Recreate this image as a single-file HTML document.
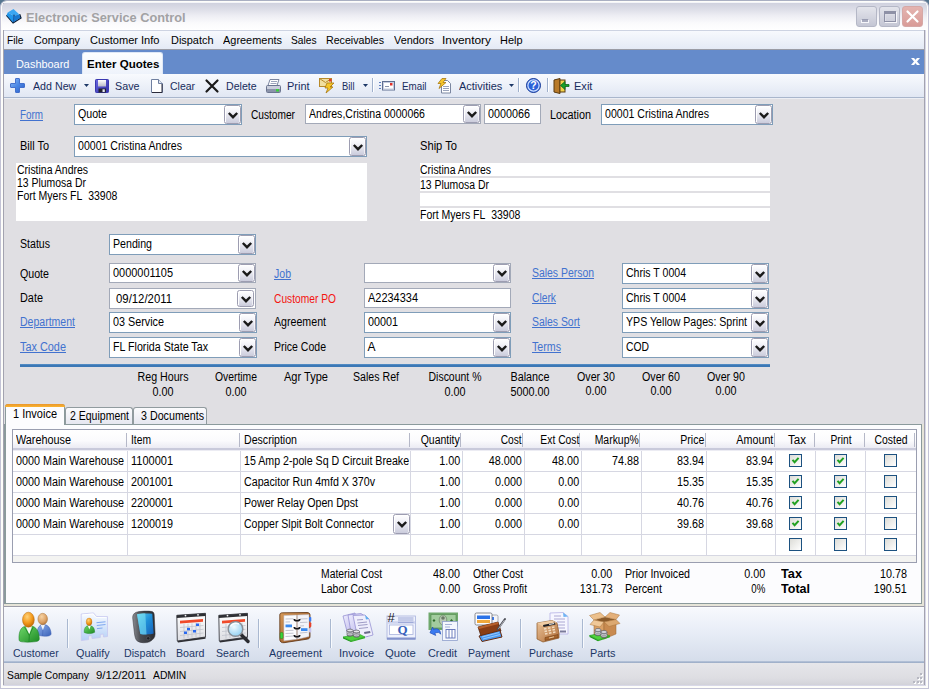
<!DOCTYPE html>
<html><head><meta charset="utf-8"><title>Electronic Service Control</title>
<style>
*{box-sizing:border-box;margin:0;padding:0}
html,body{width:929px;height:689px;overflow:hidden;background:#e0dfe3}
body{position:relative;font-family:"Liberation Sans",sans-serif;font-size:11px;color:#000;line-height:13px}
.a{position:absolute;white-space:nowrap}
.t{position:absolute;white-space:nowrap;font-size:11px;line-height:13px;color:#000}
.f{position:absolute;white-space:nowrap;font-size:12px;line-height:14px}
.lnk{color:#4272cf;text-decoration:underline}
.db{position:absolute;width:17px;border:1px solid #9d9db1;border-radius:2.5px;background:linear-gradient(#ffffff,#f4f4f9 30%,#cbccdc 100%);box-shadow:inset 1px 1px 0 #fff,inset -1px 0 0 rgba(255,255,255,.6);display:flex;align-items:center;justify-content:center}
.db svg{display:block;margin-top:1px}
svg{position:absolute;overflow:visible}
.db svg{position:static}

</style></head><body>
<div class="a" style="left:0px;top:0px;width:929px;height:689px;background:#56768f"></div>
<div class="a" style="left:0px;top:0px;width:929px;height:689px;border:1px solid #c3c3d6;border-top-color:#a9afc2;border-radius:7px 7px 0 0;background:#fdfdfa"></div>
<div class="a" style="left:3px;top:3px;width:922px;height:683px;background:#a3a3b0"></div>
<div class="a" style="left:925px;top:3px;width:1px;height:683px;background:#d8d8e8"></div>
<div class="a" style="left:3px;top:685px;width:923px;height:1px;background:#d8d8e8"></div>
<div class="a" style="left:2px;top:2px;width:925px;height:28px;border-radius:5px 5px 0 0;background:linear-gradient(#cdcfdd 0,#dcdde7 25%,#eeeef4 50%,#fafafc 75%,#ffffff 100%)"></div>
<div class="a" style="left:3px;top:2px;width:923px;height:1px;background:#f4f5f9"></div>
<svg style="left:0px;top:0px" width="28" height="28" viewBox="0 0 28 28"><path d="M6.500 15.300 L13.100 22.900 L20.900 18 L19.600 14.300" fill="none" stroke="#0a1a30" stroke-width="1.400"/><path d="M7.700 12.400 L13.500 8.900 L19.400 14.500 L13.800 15.700Z" fill="#3aa6f2"/><path d="M7.700 12.400 L13.800 15.700 L13.100 22.600 L6.600 15.200Z" fill="#2096ea"/><path d="M13.800 15.700 L19.400 14.500 L20.500 17.800 L13.100 22.600Z" fill="#1878cf"/><path d="M13.800 15.700 L13.300 22" stroke="#1560b0" stroke-width="1"/><circle cx="14" cy="15.400" r=".8" fill="#14508a"/></svg>
<div class="t " style="left:26.0px;top:11.5px;color:#a2a2a4;font-weight:bold;font-size:12.5px;transform-origin:0 0;transform:scaleX(1.021);">Electronic Service Control</div>
<div class="a" style="left:856px;top:6px;width:21px;height:21px;border:1px solid #b4b7c6;border-radius:3px;background:linear-gradient(#e4e5ec,#c4c6d4)"><div class="a" style="left:4px;top:12px;width:8px;height:4px;background:#a9acbf;border:1px solid #f6f6fa;border-top-color:#9a9db2"></div></div>
<div class="a" style="left:879px;top:6px;width:21px;height:21px;border:1px solid #b4b7c6;border-radius:3px;background:linear-gradient(#e4e5ec,#c4c6d4)"><div class="a" style="left:4px;top:4px;width:12px;height:11px;border:1px solid #8e91a6;border-top:3px solid #8e91a6;box-shadow:1px 1px 0 #f6f6fa,inset 1px 1px 0 #dcdde6"></div></div>
<div class="a" style="left:902px;top:6px;width:21px;height:21px;border:1px solid #d6a8a6;border-radius:3px;background:linear-gradient(#e4b4b0,#d99c98)"><svg style="left:3px;top:3px" width="13" height="13" viewBox="0 0 13 13"><path d="M1.5 1.5 L11.5 11.5 M11.5 1.5 L1.5 11.5" stroke="#fff" stroke-width="2.2" stroke-linecap="round"/></svg></div>
<div class="a" style="left:4px;top:30px;width:920px;height:20px;background:linear-gradient(#f7f9fd,#e4eaf6);border-top:1px solid #cdd3e2;border-bottom:1px solid #9a9ca6"></div>
<div class="t " style="left:7.0px;top:34px;transform-origin:0 0;transform:scaleX(0.931);">File</div>
<div class="t " style="left:33.5px;top:34px;transform-origin:0 0;transform:scaleX(0.977);">Company</div>
<div class="t " style="left:90.0px;top:34px;transform-origin:0 0;transform:scaleX(1.006);">Customer Info</div>
<div class="t " style="left:170.5px;top:34px;transform-origin:0 0;transform:scaleX(0.993);">Dispatch</div>
<div class="t " style="left:222.5px;top:34px;transform-origin:0 0;transform:scaleX(0.995);">Agreements</div>
<div class="t " style="left:291.0px;top:34px;transform-origin:0 0;transform:scaleX(0.927);">Sales</div>
<div class="t " style="left:325.5px;top:34px;transform-origin:0 0;transform:scaleX(0.968);">Receivables</div>
<div class="t " style="left:393.5px;top:34px;transform-origin:0 0;transform:scaleX(0.991);">Vendors</div>
<div class="t " style="left:441.5px;top:34px;transform-origin:0 0;transform:scaleX(1.083);">Inventory</div>
<div class="t " style="left:499.5px;top:34px;transform-origin:0 0;transform:scaleX(0.995);">Help</div>
<div class="a" style="left:4px;top:50px;width:920px;height:24px;background:#658bcb"></div>
<div class="t " style="left:15.5px;top:58px;color:#fff;font-size:11px;transform-origin:0 0;transform:scaleX(0.991);">Dashboard</div>
<div class="a" style="left:82px;top:52px;width:81px;height:22px;background:linear-gradient(#fdfeff,#eef3fb);border-radius:3px 3px 0 0;border:1px solid #dfe8f6;border-bottom:none"></div>
<div class="t " style="left:86.8px;top:58px;font-weight:bold;font-size:11px;transform-origin:0 0;transform:scaleX(1.048);">Enter Quotes</div>
<svg style="left:911px;top:58px" width="9" height="7" viewBox="0 0 9 7"><path d="M0 0 H3 L9 7 H6Z" fill="#fff"/><path d="M9 0 H6 L0 7 H3Z" fill="#fff"/></svg>
<div class="a" style="left:4px;top:74px;width:920px;height:24px;background:linear-gradient(#f8fafe,#e1e7f3);border-bottom:1px solid #a9b6cc"></div>
<div class="t " style="left:33.2px;top:80px;color:#172c5c;font-size:11px;transform-origin:0 0;transform:scaleX(0.970);">Add New</div>
<div class="t " style="left:115.0px;top:80px;color:#172c5c;font-size:11px;transform-origin:0 0;transform:scaleX(0.977);">Save</div>
<div class="t " style="left:169.5px;top:80px;color:#172c5c;font-size:11px;transform-origin:0 0;transform:scaleX(0.951);">Clear</div>
<div class="t " style="left:226.2px;top:80px;color:#172c5c;font-size:11px;transform-origin:0 0;transform:scaleX(0.962);">Delete</div>
<div class="t " style="left:287.0px;top:80px;color:#172c5c;font-size:11px;transform-origin:0 0;transform:scaleX(0.995);">Print</div>
<div class="t " style="left:342.0px;top:80px;color:#172c5c;font-size:11px;transform-origin:0 0;transform:scaleX(0.852);">Bill</div>
<div class="t " style="left:402.0px;top:80px;color:#172c5c;font-size:11px;transform-origin:0 0;transform:scaleX(0.891);">Email</div>
<div class="t " style="left:458.5px;top:80px;color:#172c5c;font-size:11px;transform-origin:0 0;transform:scaleX(0.998);">Activities</div>
<div class="t " style="left:573.9px;top:80px;color:#172c5c;font-size:11px;transform-origin:0 0;transform:scaleX(1.003);">Exit</div>
<svg style="left:84px;top:84px" width="5" height="3" viewBox="0 0 5 3"><path d="M0 0H5L2.5 3Z" fill="#1c3766"/></svg>
<svg style="left:363px;top:84px" width="5" height="3" viewBox="0 0 5 3"><path d="M0 0H5L2.5 3Z" fill="#1c3766"/></svg>
<svg style="left:509px;top:84px" width="5" height="3" viewBox="0 0 5 3"><path d="M0 0H5L2.5 3Z" fill="#1c3766"/></svg>
<div class="a" style="left:372px;top:78px;width:1px;height:14px;background:#9fb0cc"></div>
<div class="a" style="left:373px;top:78px;width:1px;height:14px;background:#fff"></div>
<div class="a" style="left:518px;top:78px;width:1px;height:14px;background:#9fb0cc"></div>
<div class="a" style="left:519px;top:78px;width:1px;height:14px;background:#fff"></div>
<div class="a" style="left:547px;top:78px;width:1px;height:14px;background:#9fb0cc"></div>
<div class="a" style="left:548px;top:78px;width:1px;height:14px;background:#fff"></div>
<svg style="left:10px;top:78px" width="15" height="15" viewBox="0 0 15 15"><defs><linearGradient id="gPl" x1="0" y1="0" x2="1" y2="1"><stop offset="0" stop-color="#8fbcf8"/><stop offset=".5" stop-color="#4a86e4"/><stop offset="1" stop-color="#2a5cc4"/></linearGradient><linearGradient id="gFl" x1="0" y1="0" x2="1" y2="1"><stop offset="0" stop-color="#6a68e0"/><stop offset="1" stop-color="#3230a8"/></linearGradient><linearGradient id="gFw" x1="0" y1="0" x2="0" y2="1"><stop offset="0" stop-color="#ffffff"/><stop offset="1" stop-color="#b9bac8"/></linearGradient></defs><path d="M5.500 0.800 Q5.500 0.500 6 0.500 H9 Q9.500 0.500 9.500 1 V5.500 H14 Q14.500 5.500 14.500 6 V9 Q14.500 9.500 14 9.500 H9.500 V14 Q9.500 14.500 9 14.500 H6 Q5.500 14.500 5.500 14 V9.500 H1 Q0.500 9.500 0.500 9 V6 Q0.500 5.500 1 5.500 H5.500Z" fill="url(#gPl)" stroke="#3a68c8" stroke-width=".9"/></svg>
<svg style="left:95px;top:79px" width="14" height="14" viewBox="0 0 14 14"><rect x="0.500" y="0.500" width="13" height="13" rx=".8" fill="url(#gFl)" stroke="#3a38b0"/><rect x="3" y="1" width="8" height="6.500" fill="url(#gFw)"/><rect x="3.500" y="9.500" width="7.500" height="4" fill="#22222e"/><rect x="7.500" y="10.300" width="2.300" height="2.700" fill="#e4e5f0"/></svg>
<svg style="left:151px;top:79px" width="12" height="14" viewBox="0 0 12 14"><path d="M0.5 0.5h7l4 4v9h-11z" fill="#fff" stroke="#6f7fa0"/><path d="M7.5 0.5v4h4" fill="#dfe5f0" stroke="#6f7fa0"/><path d="M11 5v8.5H1" fill="none" stroke="#2a2a3a" stroke-width="1"/></svg>
<svg style="left:205px;top:79px" width="14" height="14" viewBox="0 0 14 14"><path d="M1.5 1.5 L12.5 12.5 M12.5 1.5 L1.5 12.5" stroke="#1a1a1a" stroke-width="2.2" stroke-linecap="round"/></svg>
<svg style="left:266px;top:79px" width="15" height="14" viewBox="0 0 15 14"><path d="M4 0.5h9l-2 6h-9z" fill="#fff" stroke="#7b86a0"/><path d="M5 2.5h6M4.5 4.5h6" stroke="#9aa4bc"/><rect x="0.5" y="6.5" width="14" height="7" rx="1" fill="#c9cedc" stroke="#6b7590"/><rect x="1" y="10" width="13" height="3" fill="#8a93aa"/><rect x="10" y="10" width="3" height="2.5" fill="#3ad03a"/></svg>
<svg style="left:319px;top:78px" width="16" height="15" viewBox="0 0 16 15"><rect x="0.5" y="0.5" width="12" height="8" fill="#f1dfa0" stroke="#b88a2a"/><path d="M0.5 0.5l6 4 6-4" fill="none" stroke="#b88a2a"/><rect x="10" y="1" width="2.5" height="2.5" fill="#e03a2a"/><path d="M8 5h7l-4 4h3l-7 6 2-5h-3z" fill="#f6c62a" stroke="#a87812" stroke-width=".8"/></svg>
<svg style="left:379px;top:81px" width="16" height="10" viewBox="0 0 16 10"><rect x="3.5" y="0.5" width="12" height="8.5" fill="#f4f6fb" stroke="#5f6f92"/><rect x="4.5" y="1.5" width="10" height="6.5" fill="#fff" stroke="#c5cce0"/><rect x="11" y="2" width="2.5" height="2.5" fill="#e0302a"/><path d="M6 5.5h4" stroke="#8a94b0"/><path d="M0 1.5h2M0 4.5h2M0 7.5h2" stroke="#5f7fc0"/></svg>
<svg style="left:437px;top:78px" width="15" height="16" viewBox="0 0 15 16"><path d="M4.5 2.5h6l3 3v9.500h-9z" fill="#fff" stroke="#7b86a0"/><path d="M6 8.500h6M6 10.500h6M6 12.500h6" stroke="#9aa4bc"/><path d="M5 0.500h4l-3 4h3l-7 6 2-5h-3z" fill="#f6c62a" stroke="#a87812" stroke-width=".8"/></svg>
<svg style="left:526px;top:78px" width="15" height="15" viewBox="0 0 15 15"><circle cx="7.5" cy="7.5" r="7" fill="#2a62d8" stroke="#1a3c98"/><circle cx="7.500" cy="7.5" r="5.600" fill="none" stroke="#cfe0ff" stroke-width="1.2"/><text x="7.500" y="11.300" font-family="Liberation Sans,sans-serif" font-size="10.500" font-weight="bold" fill="#fff" text-anchor="middle">?</text></svg>
<svg style="left:553px;top:78px" width="17" height="16" viewBox="0 0 17 16"><path d="M1 2l6-1.500v15l-6-1.500z" fill="#b87a2a" stroke="#5a3a10"/><rect x="7" y="2" width="5" height="12" fill="#f2d24a" stroke="#5a3a10"/><path d="M16 8.500h-4v3l-4.500-4 4.500-4v3h4z" fill="#18a028" stroke="#0c6a18" stroke-width=".8"/></svg>
<div class="a" style="left:4px;top:98px;width:920px;height:508px;background:#e0dfe3"></div>
<div class="a" style="left:4px;top:98px;width:920px;height:1px;background:#eceef4"></div>
<div class="f lnk" style="top:108px;transform:scaleX(0.822);left:20px;transform-origin:0 0;">Form</div>
<div class="a" style="left:74px;top:104px;width:168px;height:21px;background:#fff;border:1px solid #7f9db9;"></div>
<div class="db" style="left:224px;top:105px;height:19px"><svg width="10" height="7" viewBox="0 0 10 7"><path d="M0.800 1 L5 5.200 L9.200 1" fill="none" stroke="#1a1a1a" stroke-width="2.400"/></svg></div>
<div class="f " style="top:107px;transform:scaleX(0.887);left:77.5px;transform-origin:0 0;">Quote</div>
<div class="f " style="top:108px;transform:scaleX(0.846);left:251px;transform-origin:0 0;">Customer</div>
<div class="a" style="left:305px;top:104px;width:176px;height:20px;background:#fff;border:1px solid #a3a9b8;"></div>
<div class="db" style="left:463px;top:105px;height:18px"><svg width="10" height="7" viewBox="0 0 10 7"><path d="M0.800 1 L5 5.200 L9.200 1" fill="none" stroke="#1a1a1a" stroke-width="2.400"/></svg></div>
<div class="f " style="top:107px;transform:scaleX(0.878);left:308.5px;transform-origin:0 0;">Andres,Cristina 0000066</div>
<div class="a" style="left:484px;top:104px;width:57px;height:20px;background:#fff;border:1px solid #a3a9b8"></div>
<div class="f " style="top:107px;transform:scaleX(0.899);left:488px;transform-origin:0 0;">0000066</div>
<div class="f " style="top:108px;transform:scaleX(0.904);left:550px;transform-origin:0 0;">Location</div>
<div class="a" style="left:601px;top:104px;width:172px;height:21px;background:#fff;border:1px solid #7f9db9;"></div>
<div class="db" style="left:755px;top:105px;height:19px"><svg width="10" height="7" viewBox="0 0 10 7"><path d="M0.800 1 L5 5.200 L9.200 1" fill="none" stroke="#1a1a1a" stroke-width="2.400"/></svg></div>
<div class="f " style="top:107px;transform:scaleX(0.881);left:604.5px;transform-origin:0 0;">00001 Cristina Andres</div>
<div class="f " style="top:139px;transform:scaleX(0.912);left:20px;transform-origin:0 0;">Bill To</div>
<div class="a" style="left:74px;top:136px;width:293px;height:21px;background:#fff;border:1px solid #7f9db9;"></div>
<div class="db" style="left:349px;top:137px;height:19px"><svg width="10" height="7" viewBox="0 0 10 7"><path d="M0.800 1 L5 5.200 L9.200 1" fill="none" stroke="#1a1a1a" stroke-width="2.400"/></svg></div>
<div class="f " style="top:139px;transform:scaleX(0.881);left:77.5px;transform-origin:0 0;">00001 Cristina Andres</div>
<div class="f " style="top:139px;transform:scaleX(0.929);left:420px;transform-origin:0 0;">Ship To</div>
<div class="a" style="left:16px;top:163px;width:351px;height:58px;background:#fff"></div>
<div class="f " style="top:163px;transform:scaleX(0.873);left:17px;transform-origin:0 0;">Cristina Andres</div>
<div class="f " style="top:176px;transform:scaleX(0.869);left:17px;transform-origin:0 0;">13 Plumosa Dr</div>
<div class="f " style="top:189px;transform:scaleX(0.875);left:17px;transform-origin:0 0;">Fort Myers FL&nbsp; 33908</div>
<div class="a" style="left:420px;top:163px;width:350px;height:13px;background:#fff"></div>
<div class="f " style="top:163px;transform:scaleX(0.873);left:420px;transform-origin:0 0;">Cristina Andres</div>
<div class="a" style="left:420px;top:178px;width:350px;height:13px;background:#fff"></div>
<div class="f " style="top:178px;transform:scaleX(0.869);left:420px;transform-origin:0 0;">13 Plumosa Dr</div>
<div class="a" style="left:420px;top:193px;width:350px;height:13px;background:#fff"></div>
<div class="a" style="left:420px;top:208px;width:350px;height:13px;background:#fff"></div>
<div class="f " style="top:208px;transform:scaleX(0.875);left:420px;transform-origin:0 0;">Fort Myers FL&nbsp; 33908</div>
<div class="f " style="top:237px;transform:scaleX(0.882);left:20px;transform-origin:0 0;">Status</div>
<div class="a" style="left:109px;top:234px;width:147px;height:21px;background:#fff;border:1px solid #7f9db9;"></div>
<div class="db" style="left:238px;top:235px;height:19px"><svg width="10" height="7" viewBox="0 0 10 7"><path d="M0.800 1 L5 5.200 L9.200 1" fill="none" stroke="#1a1a1a" stroke-width="2.400"/></svg></div>
<div class="f " style="top:237px;transform:scaleX(0.886);left:112.5px;transform-origin:0 0;">Pending</div>
<div class="f " style="top:267px;transform:scaleX(0.887);left:20px;transform-origin:0 0;">Quote</div>
<div class="a" style="left:109px;top:263px;width:147px;height:20px;background:#fff;border:1px solid #a3a9b8;"></div>
<div class="db" style="left:238px;top:264px;height:18px"><svg width="10" height="7" viewBox="0 0 10 7"><path d="M0.800 1 L5 5.200 L9.200 1" fill="none" stroke="#1a1a1a" stroke-width="2.400"/></svg></div>
<div class="f " style="top:266px;transform:scaleX(0.911);left:112.5px;transform-origin:0 0;">0000001105</div>
<div class="f " style="top:291px;transform:scaleX(0.907);left:20px;transform-origin:0 0;">Date</div>
<div class="a" style="left:109px;top:288px;width:147px;height:21px;background:#fff;border:1px solid #a3a9b8;"></div>
<div class="db" style="left:237px;top:290px;height:17px"><svg width="10" height="7" viewBox="0 0 10 7"><path d="M0.800 1 L5 5.200 L9.200 1" fill="none" stroke="#1a1a1a" stroke-width="2.400"/></svg></div>
<div class="f " style="top:292px;transform:scaleX(0.946);left:116px;transform-origin:0 0;">09/12/2011</div>
<div class="f lnk" style="top:315px;transform:scaleX(0.877);left:20px;transform-origin:0 0;">Department</div>
<div class="a" style="left:109px;top:312px;width:148px;height:21px;background:#fff;border:1px solid #7f9db9;"></div>
<div class="db" style="left:239px;top:313px;height:19px"><svg width="10" height="7" viewBox="0 0 10 7"><path d="M0.800 1 L5 5.200 L9.200 1" fill="none" stroke="#1a1a1a" stroke-width="2.400"/></svg></div>
<div class="f " style="top:315px;transform:scaleX(0.900);left:112.5px;transform-origin:0 0;">03 Service</div>
<div class="f lnk" style="top:340px;transform:scaleX(0.907);left:20px;transform-origin:0 0;">Tax Code</div>
<div class="a" style="left:109px;top:337px;width:148px;height:21px;background:#fff;border:1px solid #7f9db9;"></div>
<div class="db" style="left:239px;top:338px;height:19px"><svg width="10" height="7" viewBox="0 0 10 7"><path d="M0.800 1 L5 5.200 L9.200 1" fill="none" stroke="#1a1a1a" stroke-width="2.400"/></svg></div>
<div class="f " style="top:340px;transform:scaleX(0.890);left:112.5px;transform-origin:0 0;">FL Florida State Tax</div>
<div class="f lnk" style="top:267px;transform:scaleX(0.879);left:274px;transform-origin:0 0;">Job</div>
<div class="a" style="left:364px;top:263px;width:147px;height:20px;background:#fff;border:1px solid #a3a9b8;"></div>
<div class="db" style="left:493px;top:264px;height:18px"><svg width="10" height="7" viewBox="0 0 10 7"><path d="M0.800 1 L5 5.200 L9.200 1" fill="none" stroke="#1a1a1a" stroke-width="2.400"/></svg></div>
<div class="f " style="top:292px;transform:scaleX(0.853);left:274px;transform-origin:0 0;color:#f41410;">Customer PO</div>
<div class="a" style="left:364px;top:288px;width:147px;height:20px;background:#fff;border:1px solid #a3a9b8"></div>
<div class="f " style="top:291px;transform:scaleX(0.914);left:368px;transform-origin:0 0;">A2234334</div>
<div class="f " style="top:315px;transform:scaleX(0.886);left:274px;transform-origin:0 0;">Agreement</div>
<div class="a" style="left:364px;top:312px;width:147px;height:21px;background:#fff;border:1px solid #7f9db9;"></div>
<div class="db" style="left:493px;top:313px;height:19px"><svg width="10" height="7" viewBox="0 0 10 7"><path d="M0.800 1 L5 5.200 L9.200 1" fill="none" stroke="#1a1a1a" stroke-width="2.400"/></svg></div>
<div class="f " style="top:315px;transform:scaleX(0.899);left:367.5px;transform-origin:0 0;">00001</div>
<div class="f " style="top:340px;transform:scaleX(0.876);left:274px;transform-origin:0 0;">Price Code</div>
<div class="a" style="left:364px;top:337px;width:147px;height:21px;background:#fff;border:1px solid #7f9db9;"></div>
<div class="db" style="left:493px;top:338px;height:19px"><svg width="10" height="7" viewBox="0 0 10 7"><path d="M0.800 1 L5 5.200 L9.200 1" fill="none" stroke="#1a1a1a" stroke-width="2.400"/></svg></div>
<div class="f " style="top:340px;transform:scaleX(1.000);left:367.5px;transform-origin:0 0;">A</div>
<div class="f lnk" style="top:266px;transform:scaleX(0.869);left:532px;transform-origin:0 0;">Sales Person</div>
<div class="a" style="left:622px;top:263px;width:147px;height:21px;background:#fff;border:1px solid #7f9db9;"></div>
<div class="db" style="left:751px;top:264px;height:19px"><svg width="10" height="7" viewBox="0 0 10 7"><path d="M0.800 1 L5 5.200 L9.200 1" fill="none" stroke="#1a1a1a" stroke-width="2.400"/></svg></div>
<div class="f " style="top:266px;transform:scaleX(0.879);left:625.5px;transform-origin:0 0;">Chris T 0004</div>
<div class="f lnk" style="top:291px;transform:scaleX(0.857);left:532px;transform-origin:0 0;">Clerk</div>
<div class="a" style="left:622px;top:288px;width:147px;height:21px;background:#fff;border:1px solid #7f9db9;"></div>
<div class="db" style="left:751px;top:289px;height:19px"><svg width="10" height="7" viewBox="0 0 10 7"><path d="M0.800 1 L5 5.200 L9.200 1" fill="none" stroke="#1a1a1a" stroke-width="2.400"/></svg></div>
<div class="f " style="top:291px;transform:scaleX(0.879);left:625.5px;transform-origin:0 0;">Chris T 0004</div>
<div class="f lnk" style="top:315px;transform:scaleX(0.867);left:532px;transform-origin:0 0;">Sales Sort</div>
<div class="a" style="left:622px;top:312px;width:147px;height:21px;background:#fff;border:1px solid #7f9db9;"></div>
<div class="db" style="left:751px;top:313px;height:19px"><svg width="10" height="7" viewBox="0 0 10 7"><path d="M0.800 1 L5 5.200 L9.200 1" fill="none" stroke="#1a1a1a" stroke-width="2.400"/></svg></div>
<div class="f " style="top:315px;transform:scaleX(0.885);left:625.5px;transform-origin:0 0;">YPS Yellow Pages: Sprint</div>
<div class="f lnk" style="top:340px;transform:scaleX(0.888);left:532px;transform-origin:0 0;">Terms</div>
<div class="a" style="left:622px;top:337px;width:147px;height:21px;background:#fff;border:1px solid #7f9db9;"></div>
<div class="db" style="left:751px;top:338px;height:19px"><svg width="10" height="7" viewBox="0 0 10 7"><path d="M0.800 1 L5 5.200 L9.200 1" fill="none" stroke="#1a1a1a" stroke-width="2.400"/></svg></div>
<div class="f " style="top:340px;transform:scaleX(0.863);left:625.5px;transform-origin:0 0;">COD</div>
<div class="a" style="left:20px;top:364px;width:750px;height:3px;background:linear-gradient(#5b93c9,#3c78b6 50%,#3c78b6)"></div>
<div class="f " style="top:370px;transform:scaleX(0.889);left:62.5px;width:200px;text-align:center;transform-origin:50% 0;">Reg Hours</div>
<div class="f " style="top:384.5px;transform:scaleX(0.899);left:62.5px;width:200px;text-align:center;transform-origin:50% 0;">0.00</div>
<div class="f " style="top:370px;transform:scaleX(0.863);left:135.5px;width:200px;text-align:center;transform-origin:50% 0;">Overtime</div>
<div class="f " style="top:384.5px;transform:scaleX(0.899);left:135.5px;width:200px;text-align:center;transform-origin:50% 0;">0.00</div>
<div class="f " style="top:370px;transform:scaleX(0.920);left:205.5px;width:200px;text-align:center;transform-origin:50% 0;">Agr Type</div>
<div class="f " style="top:370px;transform:scaleX(0.884);left:276px;width:200px;text-align:center;transform-origin:50% 0;">Sales Ref</div>
<div class="f " style="top:370px;transform:scaleX(0.873);left:355px;width:200px;text-align:center;transform-origin:50% 0;">Discount %</div>
<div class="f " style="top:384.5px;transform:scaleX(0.899);left:355px;width:200px;text-align:center;transform-origin:50% 0;">0.00</div>
<div class="f " style="top:370px;transform:scaleX(0.899);left:429.5px;width:200px;text-align:center;transform-origin:50% 0;">Balance</div>
<div class="f " style="top:384.5px;transform:scaleX(0.899);left:429.5px;width:200px;text-align:center;transform-origin:50% 0;">5000.00</div>
<div class="f " style="top:370px;transform:scaleX(0.890);left:495.5px;width:200px;text-align:center;transform-origin:50% 0;">Over 30</div>
<div class="f " style="top:383.5px;transform:scaleX(0.899);left:495.5px;width:200px;text-align:center;transform-origin:50% 0;">0.00</div>
<div class="f " style="top:370px;transform:scaleX(0.890);left:560.5px;width:200px;text-align:center;transform-origin:50% 0;">Over 60</div>
<div class="f " style="top:383.5px;transform:scaleX(0.899);left:560.5px;width:200px;text-align:center;transform-origin:50% 0;">0.00</div>
<div class="f " style="top:370px;transform:scaleX(0.890);left:625.5px;width:200px;text-align:center;transform-origin:50% 0;">Over 90</div>
<div class="f " style="top:383.5px;transform:scaleX(0.899);left:625.5px;width:200px;text-align:center;transform-origin:50% 0;">0.00</div>
<div class="a" style="left:4px;top:424px;width:920px;height:183px;background:#9c9ca8"></div>
<div class="a" style="left:4px;top:424px;width:920px;height:182px;background:#e6e4d8"></div>
<div class="a" style="left:4px;top:424px;width:918px;height:180px;background:#fcfcfe;border:1px solid #8b9a9c;border-left-width:2px"></div>
<div class="a" style="left:65px;top:407px;width:68px;height:17px;background:linear-gradient(#fbfbfd,#e6e7f0);border:1px solid #919b9f;border-bottom:none;border-radius:3px 3px 0 0"></div>
<div class="f " style="top:409px;transform:scaleX(0.876);left:70px;transform-origin:0 0;">2 Equipment</div>
<div class="a" style="left:133px;top:407px;width:74px;height:17px;background:linear-gradient(#fbfbfd,#e6e7f0);border:1px solid #919b9f;border-bottom:none;border-radius:3px 3px 0 0"></div>
<div class="f " style="top:409px;transform:scaleX(0.891);left:141px;transform-origin:0 0;">3 Documents</div>
<div class="a" style="left:5px;top:404px;width:60px;height:21px;background:#fcfcfe;border:1px solid #8b9a9c;border-bottom:none;border-radius:3px 3px 0 0"></div>
<div class="a" style="left:5px;top:404px;width:60px;height:3px;background:linear-gradient(#e8952c,#fbb530);border-radius:3px 3px 0 0"></div>
<div class="f " style="top:407px;transform:scaleX(0.916);left:13px;transform-origin:0 0;">1 Invoice</div>
<div class="a" style="left:12px;top:429px;width:905px;height:134px;background:#fff;border:1px solid #9a9eb0"></div>
<div class="a" style="left:13px;top:430px;width:903px;height:19px;background:linear-gradient(#ffffff 0,#fbfbfd 55%,#e9e9f2 100%)"></div>
<div class="a" style="left:13px;top:448px;width:903px;height:2px;background:#c9cadb"></div>
<div class="a" style="left:13px;top:450px;width:903px;height:1px;background:#ececf3"></div>
<div class="a" style="left:126px;top:433px;width:1px;height:14px;background:#b5b8c8"></div>
<div class="a" style="left:239px;top:433px;width:1px;height:14px;background:#b5b8c8"></div>
<div class="a" style="left:409px;top:433px;width:1px;height:14px;background:#b5b8c8"></div>
<div class="a" style="left:460px;top:433px;width:1px;height:14px;background:#b5b8c8"></div>
<div class="a" style="left:522px;top:433px;width:1px;height:14px;background:#b5b8c8"></div>
<div class="a" style="left:579px;top:433px;width:1px;height:14px;background:#b5b8c8"></div>
<div class="a" style="left:639px;top:433px;width:1px;height:14px;background:#b5b8c8"></div>
<div class="a" style="left:705px;top:433px;width:1px;height:14px;background:#b5b8c8"></div>
<div class="a" style="left:774px;top:433px;width:1px;height:14px;background:#b5b8c8"></div>
<div class="a" style="left:814px;top:433px;width:1px;height:14px;background:#b5b8c8"></div>
<div class="a" style="left:864px;top:433px;width:1px;height:14px;background:#b5b8c8"></div>
<div class="a" style="left:127px;top:451px;width:1px;height:104px;background:#d6d7e2"></div>
<div class="a" style="left:240px;top:451px;width:1px;height:104px;background:#d6d7e2"></div>
<div class="a" style="left:410px;top:451px;width:1px;height:104px;background:#d6d7e2"></div>
<div class="a" style="left:462px;top:451px;width:1px;height:104px;background:#d6d7e2"></div>
<div class="a" style="left:524px;top:451px;width:1px;height:104px;background:#d6d7e2"></div>
<div class="a" style="left:581px;top:451px;width:1px;height:104px;background:#d6d7e2"></div>
<div class="a" style="left:641px;top:451px;width:1px;height:104px;background:#d6d7e2"></div>
<div class="a" style="left:706px;top:451px;width:1px;height:104px;background:#d6d7e2"></div>
<div class="a" style="left:775px;top:451px;width:1px;height:104px;background:#d6d7e2"></div>
<div class="a" style="left:815px;top:451px;width:1px;height:104px;background:#d6d7e2"></div>
<div class="a" style="left:865px;top:451px;width:1px;height:104px;background:#d6d7e2"></div>
<div class="a" style="left:914px;top:433px;width:1px;height:14px;background:#b5b8c8"></div>
<div class="a" style="left:13px;top:471px;width:903px;height:1px;background:#d6d7e2"></div>
<div class="a" style="left:13px;top:492px;width:903px;height:1px;background:#d6d7e2"></div>
<div class="a" style="left:13px;top:513px;width:903px;height:1px;background:#d6d7e2"></div>
<div class="a" style="left:13px;top:534px;width:903px;height:1px;background:#d6d7e2"></div>
<div class="a" style="left:13px;top:555px;width:903px;height:1px;background:#d6d7e2"></div>
<div class="a" style="left:13px;top:556px;width:903px;height:6px;background:#f3f3f1"></div>
<div class="f " style="top:432.5px;transform:scaleX(0.903);left:16px;transform-origin:0 0;">Warehouse</div>
<div class="f " style="top:432.5px;transform:scaleX(0.857);left:131px;transform-origin:0 0;">Item</div>
<div class="f " style="top:432.5px;transform:scaleX(0.883);left:244px;transform-origin:0 0;">Description</div>
<div class="f " style="top:432.5px;transform:scaleX(0.873);right:469px;transform-origin:100% 0;">Quantity</div>
<div class="f " style="top:432.5px;transform:scaleX(0.851);right:407px;transform-origin:100% 0;">Cost</div>
<div class="f " style="top:432.5px;transform:scaleX(0.860);right:350px;transform-origin:100% 0;">Ext Cost</div>
<div class="f " style="top:432.5px;transform:scaleX(0.868);right:290px;transform-origin:100% 0;">Markup%</div>
<div class="f " style="top:432.5px;transform:scaleX(0.878);right:225px;transform-origin:100% 0;">Price</div>
<div class="f " style="top:432.5px;transform:scaleX(0.895);right:156px;transform-origin:100% 0;">Amount</div>
<div class="f " style="top:432.5px;transform:scaleX(0.964);left:696.5px;width:200px;text-align:center;transform-origin:50% 0;">Tax</div>
<div class="f " style="top:432.5px;transform:scaleX(0.851);left:740.5px;width:200px;text-align:center;transform-origin:50% 0;">Print</div>
<div class="f " style="top:432.5px;transform:scaleX(0.868);left:790.5px;width:200px;text-align:center;transform-origin:50% 0;">Costed</div>
<div class="f " style="top:453.5px;transform:scaleX(0.898);left:16px;transform-origin:0 0;">0000 Main Warehouse</div>
<div class="f " style="top:453.5px;transform:scaleX(0.917);left:131px;transform-origin:0 0;">1100001</div>
<div class="f " style="top:453.5px;transform:scaleX(0.887);left:244px;transform-origin:0 0;">15 Amp 2-pole Sq D Circuit Breake</div>
<div class="f " style="top:453.5px;transform:scaleX(0.899);right:469px;transform-origin:100% 0;">1.00</div>
<div class="f " style="top:453.5px;transform:scaleX(0.899);right:407px;transform-origin:100% 0;">48.000</div>
<div class="f " style="top:453.5px;transform:scaleX(0.899);right:350px;transform-origin:100% 0;">48.00</div>
<div class="f " style="top:453.5px;transform:scaleX(0.899);right:290px;transform-origin:100% 0;">74.88</div>
<div class="f " style="top:453.5px;transform:scaleX(0.899);right:225px;transform-origin:100% 0;">83.94</div>
<div class="f " style="top:453.5px;transform:scaleX(0.899);right:156px;transform-origin:100% 0;">83.94</div>
<div class="f " style="top:474.5px;transform:scaleX(0.898);left:16px;transform-origin:0 0;">0000 Main Warehouse</div>
<div class="f " style="top:474.5px;transform:scaleX(0.899);left:131px;transform-origin:0 0;">2001001</div>
<div class="f " style="top:474.5px;transform:scaleX(0.889);left:244px;transform-origin:0 0;">Capacitor Run 4mfd X 370v</div>
<div class="f " style="top:474.5px;transform:scaleX(0.899);right:469px;transform-origin:100% 0;">1.00</div>
<div class="f " style="top:474.5px;transform:scaleX(0.899);right:407px;transform-origin:100% 0;">0.000</div>
<div class="f " style="top:474.5px;transform:scaleX(0.899);right:350px;transform-origin:100% 0;">0.00</div>
<div class="f " style="top:474.5px;transform:scaleX(0.899);right:225px;transform-origin:100% 0;">15.35</div>
<div class="f " style="top:474.5px;transform:scaleX(0.899);right:156px;transform-origin:100% 0;">15.35</div>
<div class="f " style="top:495.5px;transform:scaleX(0.898);left:16px;transform-origin:0 0;">0000 Main Warehouse</div>
<div class="f " style="top:495.5px;transform:scaleX(0.899);left:131px;transform-origin:0 0;">2200001</div>
<div class="f " style="top:495.5px;transform:scaleX(0.886);left:244px;transform-origin:0 0;">Power Relay Open Dpst</div>
<div class="f " style="top:495.5px;transform:scaleX(0.899);right:469px;transform-origin:100% 0;">1.00</div>
<div class="f " style="top:495.5px;transform:scaleX(0.899);right:407px;transform-origin:100% 0;">0.000</div>
<div class="f " style="top:495.5px;transform:scaleX(0.899);right:350px;transform-origin:100% 0;">0.00</div>
<div class="f " style="top:495.5px;transform:scaleX(0.899);right:225px;transform-origin:100% 0;">40.76</div>
<div class="f " style="top:495.5px;transform:scaleX(0.899);right:156px;transform-origin:100% 0;">40.76</div>
<div class="f " style="top:516.5px;transform:scaleX(0.898);left:16px;transform-origin:0 0;">0000 Main Warehouse</div>
<div class="f " style="top:516.5px;transform:scaleX(0.899);left:131px;transform-origin:0 0;">1200019</div>
<div class="f " style="top:516.5px;transform:scaleX(0.874);left:244px;transform-origin:0 0;">Copper Slpit Bolt Connector</div>
<div class="f " style="top:516.5px;transform:scaleX(0.899);right:469px;transform-origin:100% 0;">1.00</div>
<div class="f " style="top:516.5px;transform:scaleX(0.899);right:407px;transform-origin:100% 0;">0.000</div>
<div class="f " style="top:516.5px;transform:scaleX(0.899);right:350px;transform-origin:100% 0;">0.00</div>
<div class="f " style="top:516.5px;transform:scaleX(0.899);right:225px;transform-origin:100% 0;">39.68</div>
<div class="f " style="top:516.5px;transform:scaleX(0.899);right:156px;transform-origin:100% 0;">39.68</div>
<div class="a" style="left:789px;top:454px;width:13px;height:13px;border:1px solid #1c5180;background:linear-gradient(135deg,#dcdcd7,#fff)"><svg style="left:1px;top:1px" width="9" height="9" viewBox="0 0 9 9"><path d="M1.500 3.800 L3.600 6.200 L7.600 1.800" fill="none" stroke="#21a121" stroke-width="2"/></svg></div>
<div class="a" style="left:834px;top:454px;width:13px;height:13px;border:1px solid #1c5180;background:linear-gradient(135deg,#dcdcd7,#fff)"><svg style="left:1px;top:1px" width="9" height="9" viewBox="0 0 9 9"><path d="M1.500 3.800 L3.600 6.200 L7.600 1.800" fill="none" stroke="#21a121" stroke-width="2"/></svg></div>
<div class="a" style="left:884px;top:454px;width:13px;height:13px;border:1px solid #1c5180;background:linear-gradient(135deg,#dcdcd7,#fff)"></div>
<div class="a" style="left:789px;top:475px;width:13px;height:13px;border:1px solid #1c5180;background:linear-gradient(135deg,#dcdcd7,#fff)"><svg style="left:1px;top:1px" width="9" height="9" viewBox="0 0 9 9"><path d="M1.500 3.800 L3.600 6.200 L7.600 1.800" fill="none" stroke="#21a121" stroke-width="2"/></svg></div>
<div class="a" style="left:834px;top:475px;width:13px;height:13px;border:1px solid #1c5180;background:linear-gradient(135deg,#dcdcd7,#fff)"><svg style="left:1px;top:1px" width="9" height="9" viewBox="0 0 9 9"><path d="M1.500 3.800 L3.600 6.200 L7.600 1.800" fill="none" stroke="#21a121" stroke-width="2"/></svg></div>
<div class="a" style="left:884px;top:475px;width:13px;height:13px;border:1px solid #1c5180;background:linear-gradient(135deg,#dcdcd7,#fff)"></div>
<div class="a" style="left:789px;top:496px;width:13px;height:13px;border:1px solid #1c5180;background:linear-gradient(135deg,#dcdcd7,#fff)"><svg style="left:1px;top:1px" width="9" height="9" viewBox="0 0 9 9"><path d="M1.500 3.800 L3.600 6.200 L7.600 1.800" fill="none" stroke="#21a121" stroke-width="2"/></svg></div>
<div class="a" style="left:834px;top:496px;width:13px;height:13px;border:1px solid #1c5180;background:linear-gradient(135deg,#dcdcd7,#fff)"><svg style="left:1px;top:1px" width="9" height="9" viewBox="0 0 9 9"><path d="M1.500 3.800 L3.600 6.200 L7.600 1.800" fill="none" stroke="#21a121" stroke-width="2"/></svg></div>
<div class="a" style="left:884px;top:496px;width:13px;height:13px;border:1px solid #1c5180;background:linear-gradient(135deg,#dcdcd7,#fff)"></div>
<div class="a" style="left:789px;top:517px;width:13px;height:13px;border:1px solid #1c5180;background:linear-gradient(135deg,#dcdcd7,#fff)"><svg style="left:1px;top:1px" width="9" height="9" viewBox="0 0 9 9"><path d="M1.500 3.800 L3.600 6.200 L7.600 1.800" fill="none" stroke="#21a121" stroke-width="2"/></svg></div>
<div class="a" style="left:834px;top:517px;width:13px;height:13px;border:1px solid #1c5180;background:linear-gradient(135deg,#dcdcd7,#fff)"><svg style="left:1px;top:1px" width="9" height="9" viewBox="0 0 9 9"><path d="M1.500 3.800 L3.600 6.200 L7.600 1.800" fill="none" stroke="#21a121" stroke-width="2"/></svg></div>
<div class="a" style="left:884px;top:517px;width:13px;height:13px;border:1px solid #1c5180;background:linear-gradient(135deg,#dcdcd7,#fff)"></div>
<div class="a" style="left:789px;top:538px;width:13px;height:13px;border:1px solid #1c5180;background:linear-gradient(135deg,#dcdcd7,#fff)"></div>
<div class="a" style="left:834px;top:538px;width:13px;height:13px;border:1px solid #1c5180;background:linear-gradient(135deg,#dcdcd7,#fff)"></div>
<div class="a" style="left:884px;top:538px;width:13px;height:13px;border:1px solid #1c5180;background:linear-gradient(135deg,#dcdcd7,#fff)"></div>
<div class="db" style="left:393px;top:514px;width:17px;height:20px"><svg width="10" height="7" viewBox="0 0 10 7"><path d="M0.800 1 L5 5.200 L9.200 1" fill="none" stroke="#1a1a1a" stroke-width="2.400"/></svg></div>
<div class="f " style="top:566.7px;transform:scaleX(0.863);left:321px;transform-origin:0 0;">Material Cost</div>
<div class="f " style="top:566.7px;transform:scaleX(0.899);right:468.5px;transform-origin:100% 0;">48.00</div>
<div class="f " style="top:566.7px;transform:scaleX(0.862);left:473px;transform-origin:0 0;">Other Cost</div>
<div class="f " style="top:566.7px;transform:scaleX(0.899);right:316.5px;transform-origin:100% 0;">0.00</div>
<div class="f " style="top:566.7px;transform:scaleX(0.886);left:625px;transform-origin:0 0;">Prior Invoiced</div>
<div class="f " style="top:566.7px;transform:scaleX(0.899);right:164px;transform-origin:100% 0;">0.00</div>
<div class="f " style="top:566.7px;transform:scaleX(1.061);left:781px;transform-origin:0 0;font-weight:bold;">Tax</div>
<div class="f " style="top:566.7px;transform:scaleX(0.899);right:22px;transform-origin:100% 0;">10.78</div>
<div class="f " style="top:581.7px;transform:scaleX(0.869);left:321px;transform-origin:0 0;">Labor Cost</div>
<div class="f " style="top:581.7px;transform:scaleX(0.899);right:468.5px;transform-origin:100% 0;">0.00</div>
<div class="f " style="top:581.7px;transform:scaleX(0.852);left:473px;transform-origin:0 0;">Gross Profit</div>
<div class="f " style="top:581.7px;transform:scaleX(0.899);right:316.5px;transform-origin:100% 0;">131.73</div>
<div class="f " style="top:581.7px;transform:scaleX(0.895);left:625px;transform-origin:0 0;">Percent</div>
<div class="f " style="top:581.7px;transform:scaleX(0.807);right:164px;transform-origin:100% 0;">0%</div>
<div class="f " style="top:581.7px;transform:scaleX(1.044);left:781px;transform-origin:0 0;font-weight:bold;">Total</div>
<div class="f " style="top:581.7px;transform:scaleX(0.899);right:22px;transform-origin:100% 0;">190.51</div>
<div class="a" style="left:4px;top:607px;width:920px;height:56px;background:linear-gradient(#f7f9fd 0,#e9eef7 40%,#d4dcea 100%);border-top:1px solid #fbfcfe"></div>
<div class="a" style="left:4px;top:661px;width:920px;height:2px;background:linear-gradient(#b9c6dc,#98a9c4)"></div>
<div class="a" style="left:4px;top:663px;width:920px;height:22px;background:linear-gradient(#e6e6ea,#dddde2 70%,#d2d2d9)"></div>
<div class="t " style="left:7.3px;top:669px;font-size:11px;transform-origin:0 0;transform:scaleX(0.938);">Sample Company</div>
<div class="t " style="left:96.1px;top:669px;font-size:11px;transform-origin:0 0;transform:scaleX(1.039);">9/12/2011</div>
<div class="t " style="left:153.3px;top:669px;font-size:11px;transform-origin:0 0;transform:scaleX(0.939);">ADMIN</div>
<div class="a" style="left:920px;top:673px;width:2px;height:2px;background:#b7b8c2;box-shadow:1px 1px 0 #fff"></div>
<div class="a" style="left:917px;top:677px;width:2px;height:2px;background:#b7b8c2;box-shadow:1px 1px 0 #fff"></div>
<div class="a" style="left:920px;top:677px;width:2px;height:2px;background:#b7b8c2;box-shadow:1px 1px 0 #fff"></div>
<div class="a" style="left:913px;top:681px;width:2px;height:2px;background:#b7b8c2;box-shadow:1px 1px 0 #fff"></div>
<div class="a" style="left:917px;top:681px;width:2px;height:2px;background:#b7b8c2;box-shadow:1px 1px 0 #fff"></div>
<div class="a" style="left:920px;top:681px;width:2px;height:2px;background:#b7b8c2;box-shadow:1px 1px 0 #fff"></div>
<div class="t " style="left:12.5px;top:646.5px;color:#1c3766;font-size:11px;transform-origin:0 0;transform:scaleX(0.958);">Customer</div>
<div class="t " style="left:76.2px;top:646.5px;color:#1c3766;font-size:11px;transform-origin:0 0;transform:scaleX(0.984);">Qualify</div>
<div class="t " style="left:123.5px;top:646.5px;color:#1c3766;font-size:11px;transform-origin:0 0;transform:scaleX(0.972);">Dispatch</div>
<div class="t " style="left:176.2px;top:646.5px;color:#1c3766;font-size:11px;transform-origin:0 0;transform:scaleX(0.971);">Board</div>
<div class="t " style="left:216.1px;top:646.5px;color:#1c3766;font-size:11px;transform-origin:0 0;transform:scaleX(0.958);">Search</div>
<div class="t " style="left:268.6px;top:646.5px;color:#1c3766;font-size:11px;transform-origin:0 0;transform:scaleX(0.983);">Agreement</div>
<div class="t " style="left:339.2px;top:646.5px;color:#1c3766;font-size:11px;transform-origin:0 0;transform:scaleX(1.007);">Invoice</div>
<div class="t " style="left:385.2px;top:646.5px;color:#1c3766;font-size:11px;transform-origin:0 0;transform:scaleX(1.028);">Quote</div>
<div class="t " style="left:427.5px;top:646.5px;color:#1c3766;font-size:11px;transform-origin:0 0;transform:scaleX(0.988);">Credit</div>
<div class="t " style="left:468.4px;top:646.5px;color:#1c3766;font-size:11px;transform-origin:0 0;transform:scaleX(0.963);">Payment</div>
<div class="t " style="left:529.3px;top:646.5px;color:#1c3766;font-size:11px;transform-origin:0 0;transform:scaleX(0.949);">Purchase</div>
<div class="t " style="left:590.1px;top:646.5px;color:#1c3766;font-size:11px;transform-origin:0 0;transform:scaleX(0.989);">Parts</div>
<div class="a" style="left:67px;top:619px;width:1px;height:29px;background:#a9b8d0"></div>
<div class="a" style="left:68px;top:619px;width:1px;height:29px;background:#f8fafd"></div>
<div class="a" style="left:258px;top:619px;width:1px;height:29px;background:#a9b8d0"></div>
<div class="a" style="left:259px;top:619px;width:1px;height:29px;background:#f8fafd"></div>
<div class="a" style="left:330px;top:619px;width:1px;height:29px;background:#a9b8d0"></div>
<div class="a" style="left:331px;top:619px;width:1px;height:29px;background:#f8fafd"></div>
<div class="a" style="left:520px;top:619px;width:1px;height:29px;background:#a9b8d0"></div>
<div class="a" style="left:521px;top:619px;width:1px;height:29px;background:#f8fafd"></div>
<div class="a" style="left:582px;top:619px;width:1px;height:29px;background:#a9b8d0"></div>
<div class="a" style="left:583px;top:619px;width:1px;height:29px;background:#f8fafd"></div>
<svg width="0" height="0" style="left:0;top:0"><defs>
<radialGradient id="gO" cx=".4" cy=".3" r=".7"><stop offset="0" stop-color="#ffd27a"/><stop offset=".6" stop-color="#f39a1c"/><stop offset="1" stop-color="#c66a08"/></radialGradient>
<radialGradient id="gT" cx=".4" cy=".3" r=".7"><stop offset="0" stop-color="#f6d3a4"/><stop offset=".7" stop-color="#dba064"/><stop offset="1" stop-color="#b67a3c"/></radialGradient>
<linearGradient id="gG" x1="0" y1="0" x2="1" y2="1"><stop offset="0" stop-color="#6fd86a"/><stop offset="1" stop-color="#1d8a24"/></linearGradient>
<linearGradient id="gB" x1="0" y1="0" x2="1" y2="1"><stop offset="0" stop-color="#8fb0ec"/><stop offset="1" stop-color="#3a62b8"/></linearGradient>
<linearGradient id="gPh" x1="0" y1="0" x2="1" y2="0"><stop offset="0" stop-color="#8a8c92"/><stop offset=".35" stop-color="#4a4c52"/><stop offset="1" stop-color="#2a2b30"/></linearGradient>
<linearGradient id="gSc" x1="0" y1="0" x2="1" y2="1"><stop offset="0" stop-color="#5fd0f0"/><stop offset=".5" stop-color="#1f8fd8"/><stop offset="1" stop-color="#1660b8"/></linearGradient>
<linearGradient id="gCal" x1="0" y1="0" x2="0" y2="1"><stop offset="0" stop-color="#ffffff"/><stop offset="1" stop-color="#dcdde2"/></linearGradient>
<linearGradient id="gBr" x1="0" y1="0" x2="1" y2="1"><stop offset="0" stop-color="#d79a5a"/><stop offset="1" stop-color="#8a4a1c"/></linearGradient>
<linearGradient id="gReg" x1="0" y1="0" x2="1" y2="1"><stop offset="0" stop-color="#ebc49a"/><stop offset="1" stop-color="#b06c36"/></linearGradient>
<linearGradient id="gLav" x1="0" y1="0" x2="1" y2="1"><stop offset="0" stop-color="#f0efff"/><stop offset="1" stop-color="#aaa3e2"/></linearGradient>
<linearGradient id="gCard" x1="0" y1="0" x2="0" y2="1"><stop offset="0" stop-color="#fafcff"/><stop offset="1" stop-color="#b4d0f6"/></linearGradient>
<linearGradient id="gBox" x1="0" y1="0" x2="1" y2="0"><stop offset="0" stop-color="#e9b884"/><stop offset="1" stop-color="#c88a50"/></linearGradient>
<radialGradient id="gLens" cx=".4" cy=".35" r=".7"><stop offset="0" stop-color="#f2fbff"/><stop offset="1" stop-color="#8fd0f2"/></radialGradient>
</defs></svg>
<svg style="left:0;top:606px" width="929" height="58" viewBox="0 606 929 58">
<!-- small person -->
<path d="M37.300 634.500 C37 629 38.500 625.200 42.700 624.600 C47.500 624.200 50.600 627.500 51.100 633.500 C51.200 635 50 635.600 48.500 635.900 C45 636.500 40 636.300 37.300 634.500Z" fill="url(#gB)" stroke="#3a5cb0" stroke-width=".5"/>
<path d="M40.800 625 L42.900 630 L45 624.800Z" fill="#f2f5fb"/>
<path d="M42.900 630 L42.600 636" stroke="#3a5cb0" stroke-width=".5"/>
<ellipse cx="42.700" cy="619" rx="4.800" ry="5.700" fill="url(#gT)" stroke="#a8743a" stroke-width=".5"/>
<!-- big person -->
<path d="M19 639.500 C18.500 631 21.500 626.500 26 626 L31 626 C36 626.500 39.300 631 39.300 639 C39.300 640.500 38 641.300 36 641.600 C30 642.400 23 642.300 20.500 641.500 C19.500 641.200 19 640.500 19 639.500Z" fill="url(#gG)" stroke="#1a7a20" stroke-width=".5"/>
<path d="M25.600 626.300 L29.300 634.500 L32 626.300Z" fill="#f4f8f4"/>
<path d="M24.500 627 L29.300 635.500 L33.200 627 M29.300 635.500 L29 642" fill="none" stroke="#178020" stroke-width=".7"/>
<ellipse cx="28.400" cy="619.700" rx="5.900" ry="7.500" fill="url(#gO)" stroke="#b86a0a" stroke-width=".5"/>
<!-- qualify card -->
<path d="M81.200 614 L93.500 612.900 L96.500 616.500 L107.500 616.600 L107.500 636.500 L103.500 637 L103.300 634 L100.300 634.400 L100.300 637.500 L92 638.600 L91.800 635.600 L88.500 636 L88.600 639.600 L81.300 640.600Z" fill="url(#gCard)" stroke="#c6c8f0" stroke-width=".8"/>
<path d="M82.200 615 L93 614 L96 617.500 L106.500 617.600" fill="none" stroke="#fff" stroke-width=".9"/>
<path d="M96.500 622.700 L105.500 621.800 M96.800 625.500 L105.500 624.500 M97 628.600 L102.500 628" stroke="#7fa8f0" stroke-width="1"/>
<path d="M84.200 632.500 C84 628.500 85.500 626 88 625.800 L90.500 625.800 C93 626 94.700 628.500 94.700 632.300 C92 634 87 634 84.200 632.500Z" fill="url(#gG)" stroke="#1a7a20" stroke-width=".4"/>
<path d="M88 626 L89.300 629.500 L90.700 626Z" fill="#fff"/>
<ellipse cx="89.100" cy="621.800" rx="2.900" ry="3.800" fill="url(#gO)" stroke="#b86a0a" stroke-width=".3"/>
<!-- phone -->
<path d="M136.500 612.200 C141 611 148 610.800 152 611.500 C153.500 611.900 154 613 154.200 614.500 L155.100 634 C155.200 637.500 153 640 149.500 641.800 C146 643.300 140.500 643 137.500 641.200 C135.500 639.800 134.800 636.500 134.300 632 L132.700 618 C132.500 615 134 613 136.500 612.200Z" fill="url(#gPh)" stroke="#2e2f34" stroke-width=".5"/>
<path d="M137 614.200 C141 613.200 148 613.200 152.300 613.800 L153.600 633.600 C150 634.800 144 634.700 140.300 634Z" fill="url(#gSc)"/>
<path d="M137 614.200 C139.500 613.600 143 613.300 145.300 613.300 L146.500 634.600 C144 634.600 142 634.400 140.300 634Z" fill="#7fe2f4" opacity=".6"/>
<circle cx="148.200" cy="638.300" r="1.700" fill="#1e1f24" stroke="#6a6c72" stroke-width=".5"/>
</svg>
<svg style="left:176px;top:612px" width="31" height="31" viewBox="0 0 31 31">
<path d="M0.800 3.300 L29.500 1.300 L29.500 25 L1.300 29Z" fill="url(#gCal)" stroke="#3e3f46" stroke-width=".9"/>
<path d="M0.800 3.300 L29.500 1.300 L29.500 4 L0.800 6Z" fill="#2e2f34"/>
<path d="M4 8.800 L27 7 L27 9.800 L4 11.600Z" fill="#f04a2a"/>
<path d="M4 15.500 L27.500 13.500 M4 19.500 L27.500 17.300 M4 23.500 L27.500 21 M8 12 L8 26.500 M12 11.700 L12 26 M16 11.400 L16 25.500 M20 11 L20 25.200 M24 10.700 L24 24.800" stroke="#bcbec8" stroke-width=".7"/>
<circle cx="9.500" cy="3.600" r=".9" fill="#f4f4f6"/><circle cx="22" cy="2.800" r=".9" fill="#f4f4f6"/>
<path d="M1.300 29 L29.500 25 L29.500 26.700 L2 30.600Z" fill="#2e2f34"/>

<rect x="20" y="11.500" width="3" height="2.500" fill="#2a6af0"/><rect x="11" y="15.800" width="3" height="2.500" fill="#2a6af0"/><rect x="8" y="19.500" width="3" height="2.500" fill="#2a6af0"/><rect x="17" y="18" width="3" height="2.500" fill="#2a6af0"/>
</svg>
<svg style="left:218px;top:612px" width="32" height="32" viewBox="0 0 32 32">
<path d="M0.800 3.300 L29.500 1.300 L29.500 25 L1.300 29Z" fill="url(#gCal)" stroke="#3e3f46" stroke-width=".9"/>
<path d="M0.800 3.300 L29.500 1.300 L29.500 4 L0.800 6Z" fill="#2e2f34"/>
<path d="M4 8.800 L27 7 L27 9.800 L4 11.600Z" fill="#f04a2a"/>
<path d="M4 15.500 L27.500 13.500 M4 19.500 L27.500 17.300 M4 23.500 L27.500 21 M8 12 L8 26.500 M12 11.700 L12 26 M16 11.400 L16 25.500 M20 11 L20 25.200 M24 10.700 L24 24.800" stroke="#bcbec8" stroke-width=".7"/>
<circle cx="9.500" cy="3.600" r=".9" fill="#f4f4f6"/><circle cx="22" cy="2.800" r=".9" fill="#f4f4f6"/>
<path d="M1.300 29 L29.500 25 L29.500 26.700 L2 30.600Z" fill="#2e2f34"/>

<path d="M23 22.500 L30 29.500" stroke="#2a2b30" stroke-width="3.400" stroke-linecap="round"/>
<circle cx="17.500" cy="17" r="7.300" fill="url(#gLens)" stroke="#8a9098" stroke-width="1.500"/>
<path d="M12.500 14.500 C14 11.500 18 10.500 21 12" fill="none" stroke="#fff" stroke-width="1.500" opacity=".9"/>
</svg>
<svg style="left:279px;top:612px" width="33" height="32" viewBox="0 0 33 32">
<path d="M0.800 3 C0.800 1.500 1.800 0.800 3.300 0.800 L28 0.500 C30 0.500 31 1.500 31 3 L31 24.500 C31 26 30 26.800 28.500 27.100 L5 30.700 C2.800 31 0.800 29.700 0.800 27.700Z" fill="url(#gBr)" stroke="#5a2e0e" stroke-width=".8"/>
<path d="M4.900 3.600 L17.600 3 L17.600 27.300 L4.900 28.800Z" fill="#fbfbfd" stroke="#b9b9c6" stroke-width=".5"/>
<path d="M18.400 3 L30 2.600 L30 24.500 L18.400 27.200Z" fill="#f3f3f8" stroke="#b9b9c6" stroke-width=".5"/>
<path d="M6.500 7 L14.500 6.800 M6.500 10 L11 9.900 M6.500 18.500 L14.500 18.300 M6.500 21.500 L14.500 21.200 M6.500 24.500 L14.500 24 M21 7 L28.500 6.700 M21 10.500 L28.500 10.200 M21 14 L25 13.800 M21 21 L28.500 20.300" stroke="#b5b6c4" stroke-width=".8"/>
<rect x="6.500" y="12.500" width="6.500" height="2.800" fill="#3a8af0"/><rect x="22" y="16.200" width="6.500" height="2.800" fill="#3a8af0"/>
<path d="M15.300 7 C15.300 9.300 20.700 9.300 20.700 7 M15.300 15 C15.300 17.300 20.700 17.300 20.700 15 M15.300 23 C15.300 25.300 20.700 25.300 20.700 23" fill="none" stroke="#18181c" stroke-width="1.700"/>
<rect x="1.200" y="20.500" width="2.800" height="6" rx="1" fill="#3ad23a" stroke="#1a8a1a" stroke-width=".5"/>
<rect x="30" y="5" width="2.300" height="4.500" rx=".8" fill="#3a7af0"/><rect x="30" y="10.500" width="2.300" height="4.500" rx=".8" fill="#e8402a"/><rect x="30" y="16" width="2.300" height="4.500" rx=".8" fill="#c9c5ee"/>
</svg>
<svg style="left:341px;top:612px" width="33" height="30" viewBox="0 0 33 30">
<path d="M2 4 L14 1 L20 24 L8 27Z" fill="url(#gLav)" stroke="#8d86cf" stroke-width=".7"/>
<path d="M7 3 L20 1.500 L25 5 L27 24 L11 26Z" fill="url(#gLav)" stroke="#8d86cf" stroke-width=".7"/>
<path d="M12 3.500 L24 3 L28 7 L32 23 L17 27Z" fill="#efeefc" stroke="#8d86cf" stroke-width=".7"/>
<path d="M24 3 L25 7.500 L28 7Z" fill="#5fb0f0"/>
<path d="M16 8 L22 7.500 M16.500 11 L26 10 M17 13.500 L26.500 12.500 M18 16.500 L27 15.500" stroke="#8a86b8" stroke-width=".8"/>
<path d="M23 20 L29 19 L29.500 21 L23.500 22Z" fill="#6a6a8a"/>
<path d="M2 25 L18 22 L24 25 L10 29Z" fill="#4fd43a" stroke="#1f9a1a" stroke-width=".6"/>
<path d="M2 25 L10 29 L10 30 L2 26.500Z" fill="#1f9a1a"/><path d="M10 29 L24 25 L24 26.300 L10 30Z" fill="#2fae22"/>

<ellipse cx="9" cy="18.5" rx="3" ry="1.300" fill="#d9d9de" stroke="#55565c" stroke-width=".6"/>
<path d="M6 18.5 v4.500 a3 1.300 0 0 0 6 0 v-4.500" fill="#8a8b92" stroke="#55565c" stroke-width=".6"/>
<path d="M6 20.0 a3 1.300 0 0 0 6 0 M6 21.5 a3 1.300 0 0 0 6 0" fill="none" stroke="#e9e9ee" stroke-width=".6"/>
<ellipse cx="9" cy="18.5" rx="3" ry="1.300" fill="#e4e4ea" stroke="#55565c" stroke-width=".5"/>

<ellipse cx="15.5" cy="19.5" rx="3" ry="1.300" fill="#d9d9de" stroke="#55565c" stroke-width=".6"/>
<path d="M12.5 19.5 v4.500 a3 1.300 0 0 0 6 0 v-4.500" fill="#8a8b92" stroke="#55565c" stroke-width=".6"/>
<path d="M12.5 21.0 a3 1.300 0 0 0 6 0 M12.5 22.5 a3 1.300 0 0 0 6 0" fill="none" stroke="#e9e9ee" stroke-width=".6"/>
<ellipse cx="15.5" cy="19.5" rx="3" ry="1.300" fill="#e4e4ea" stroke="#55565c" stroke-width=".5"/>
</svg>
<svg style="left:386px;top:612px" width="31" height="29" viewBox="0 0 31 29">
<rect x="1" y="4" width="28.500" height="23" fill="#eef1fc" stroke="#a9b2dc" stroke-width=".8"/>
<rect x="1" y="25.500" width="28.500" height="2.200" fill="#8493cc"/>
<rect x="1.500" y="9.300" width="27.500" height="2.400" fill="#cdd3ee"/>
<rect x="3.500" y="13" width="23.500" height="9.500" fill="#fff" stroke="#a9b2dc" stroke-width=".8"/>
<path d="M12 6 H27.500 M12 8 H27.500 M12 10.300 H27.500" stroke="#8493cc" stroke-width=".8"/>
<text x="1.500" y="10" font-family="Liberation Sans,sans-serif" font-size="13" fill="#15151c">#</text>
<text x="11.500" y="21.800" font-family="Liberation Serif,serif" font-size="13" font-weight="bold" fill="#3560bc">Q</text>
</svg>
<svg style="left:428px;top:612px" width="30" height="29" viewBox="0 0 30 29">
<path d="M0.500 0.500 H30 V14 L26 18 H0.500Z" fill="#6fa86c"/>
<path d="M3 2.500 H28 V12 L24 16 H3Z" fill="#a2cc9e" stroke="#4f8a4a" stroke-width=".6"/>
<ellipse cx="15" cy="8" rx="3.800" ry="5" fill="#b9c9b4" stroke="#5a7a56" stroke-width=".6"/><circle cx="15" cy="6" r="1.800" fill="#6a7a66"/>
<path d="M6 7 l1.500 1.500 l-1.500 1.500 l-1.500 -1.500Z M23.500 7 l1.500 1.500 l-1.500 1.500 l-1.500 -1.500Z" fill="#2f6a2a"/>
<rect x="14.500" y="9.500" width="15" height="19" fill="#f4f7fd" stroke="#8fa0cc" stroke-width=".8"/>
<path d="M17 12.500 H24 M17 15 H22" stroke="#8fa0cc" stroke-width=".8"/>
<rect x="18" y="17.500" width="9" height="8.500" fill="#fff" stroke="#5f72b8" stroke-width=".9"/><path d="M21 17.500 V26 M24 17.500 V26" stroke="#5f72b8" stroke-width=".9"/>
<path d="M2 19 L6.500 14.500 L6.500 17 C11 17 13 20 11.500 24 C11.500 22 9.500 21 6.500 21 L6.500 23.500Z" fill="#3a7af0" stroke="#1c4cb8" stroke-width=".6" transform="rotate(-20 7 20)"/>
</svg>
<svg style="left:474px;top:612px" width="33" height="30" viewBox="0 0 33 30">
<rect x="8" y="3" width="16" height="11" rx="1.500" fill="#f4f4f8" stroke="#8a8c94" stroke-width=".7"/><rect x="10" y="5" width="10" height="3" fill="#3a7af0"/>
<rect x="1" y="1" width="17" height="12" rx="1.500" fill="#fbfbfd" stroke="#6a6c74" stroke-width=".8"/><rect x="3" y="3.500" width="13" height="3.500" fill="#2a72e8"/><rect x="3" y="8" width="13" height="3" fill="#f0a83a"/>
<path d="M4 15 L24 10 L27 19 L7 24Z" fill="#8a3e14" stroke="#4a1c06" stroke-width=".7"/>
<path d="M4 15 L24 10 L24.500 12 L5 17Z" fill="#b8602a"/>
<path d="M5 24 L26 18.500 L28 25 L8 29.500Z" fill="#4a98f0" stroke="#6a2a0a" stroke-width="1"/>
<path d="M8 25 L25 20.500 M9 27 L26 22.500" stroke="#a9d4ff" stroke-width=".8"/>
<path d="M23.500 17.500 L31 7" stroke="#4a4c54" stroke-width="2" stroke-linecap="round"/><path d="M24.500 16.800 L30.500 8" stroke="#c9cbd2" stroke-width=".8"/>
</svg>
<svg style="left:536px;top:612px" width="33" height="31" viewBox="0 0 33 31">
<path d="M14 1 L27 0.500 L32 4.500 L32 22 L14 22Z" fill="#f6f6ff" stroke="#b5b1e6" stroke-width=".8"/>
<path d="M27 0.500 L27.500 5 L32 4.500Z" fill="#6fb4f4"/>
<path d="M18 4 L25 4 M18 7 L29 7 M21 10 L29 10 M21 13 L29 13 M21 16 L29 16" stroke="#9a96c8" stroke-width=".8"/>
<rect x="24" y="18.500" width="6" height="2" fill="#7a7a9a"/>
<path d="M1 11 L16 8.500 L21 11 L23 21 L23 26 L7 30 L1 27Z" fill="url(#gReg)" stroke="#8a5422" stroke-width=".7"/>
<path d="M1 11 L16 8.500 L21 11 L6 14Z" fill="#f0cca4"/>
<path d="M7 13 L19 10.500 L19.500 12.500 L7.500 15Z" fill="#1e1e22"/><path d="M13 11.900 L18 10.900 L18.300 12 L13.300 13Z" fill="#e8e8ea"/>
<path d="M8 17 l2.500 -.5 M12 16.300 l2.500 -.5 M16 15.500 l2.500 -.5 M8.500 19.500 l2.500 -.5 M12.500 18.800 l2.500 -.5 M16.500 18 l2.500 -.5 M9 22 l2.500 -.5 M13 21.300 l2.500 -.5 M17 20.500 l2.500 -.5" stroke="#f2dcc0" stroke-width="1.500"/>
<path d="M9 25.500 L22 22.500 L22 25.500 L9 28.500Z" fill="#a8652c" stroke="#6a3812" stroke-width=".5"/><path d="M13 26 L18 24.800" stroke="#e9c9a0" stroke-width="1"/>
</svg>
<svg style="left:589px;top:612px" width="31" height="30" viewBox="0 0 31 30">
<path d="M5 8 L15 10 L15 27 L5 23Z" fill="#d9a066" stroke="#9a6430" stroke-width=".5"/>
<path d="M15 10 L27 7.500 L27 22 L15 27Z" fill="#c88a50" stroke="#9a6430" stroke-width=".5"/>
<path d="M5 8 L16 5 L27 7.500 L15 10Z" fill="#8a5a2a"/>
<path d="M5 8 L0.500 3.500 L11 0.500 L16 5Z" fill="#ecc08c" stroke="#a9743c" stroke-width=".5"/>
<path d="M16 5 L21 0.500 L30.500 3 L27 7.500Z" fill="#e4b07a" stroke="#a9743c" stroke-width=".5"/>
<path d="M5 8 L1 12.500 L11 15 L15 10Z" fill="#f0c898" stroke="#a9743c" stroke-width=".5"/>
<path d="M15 10 L20 14.500 L31 11.500 L27 7.500Z" fill="#dca870" stroke="#a9743c" stroke-width=".5"/>
<path d="M0.500 23.500 L13 21 L21 24 L9 28Z" fill="#4fd43a" stroke="#1f9a1a" stroke-width=".6"/>
<path d="M0.500 23.500 L9 28 L9 29.300 L0.500 25Z" fill="#1f9a1a"/><path d="M9 28 L21 24 L21 25.300 L9 29.300Z" fill="#2fae22"/>

<ellipse cx="9" cy="18" rx="3" ry="1.300" fill="#d9d9de" stroke="#55565c" stroke-width=".6"/>
<path d="M6 18 v4.500 a3 1.300 0 0 0 6 0 v-4.500" fill="#8a8b92" stroke="#55565c" stroke-width=".6"/>
<path d="M6 19.5 a3 1.300 0 0 0 6 0 M6 21 a3 1.300 0 0 0 6 0" fill="none" stroke="#e9e9ee" stroke-width=".6"/>
<ellipse cx="9" cy="18" rx="3" ry="1.300" fill="#e4e4ea" stroke="#55565c" stroke-width=".5"/>

<ellipse cx="15" cy="20" rx="3" ry="1.300" fill="#d9d9de" stroke="#55565c" stroke-width=".6"/>
<path d="M12 20 v4.500 a3 1.300 0 0 0 6 0 v-4.500" fill="#8a8b92" stroke="#55565c" stroke-width=".6"/>
<path d="M12 21.5 a3 1.300 0 0 0 6 0 M12 23 a3 1.300 0 0 0 6 0" fill="none" stroke="#e9e9ee" stroke-width=".6"/>
<ellipse cx="15" cy="20" rx="3" ry="1.300" fill="#e4e4ea" stroke="#55565c" stroke-width=".5"/>
</svg>
</body></html>
